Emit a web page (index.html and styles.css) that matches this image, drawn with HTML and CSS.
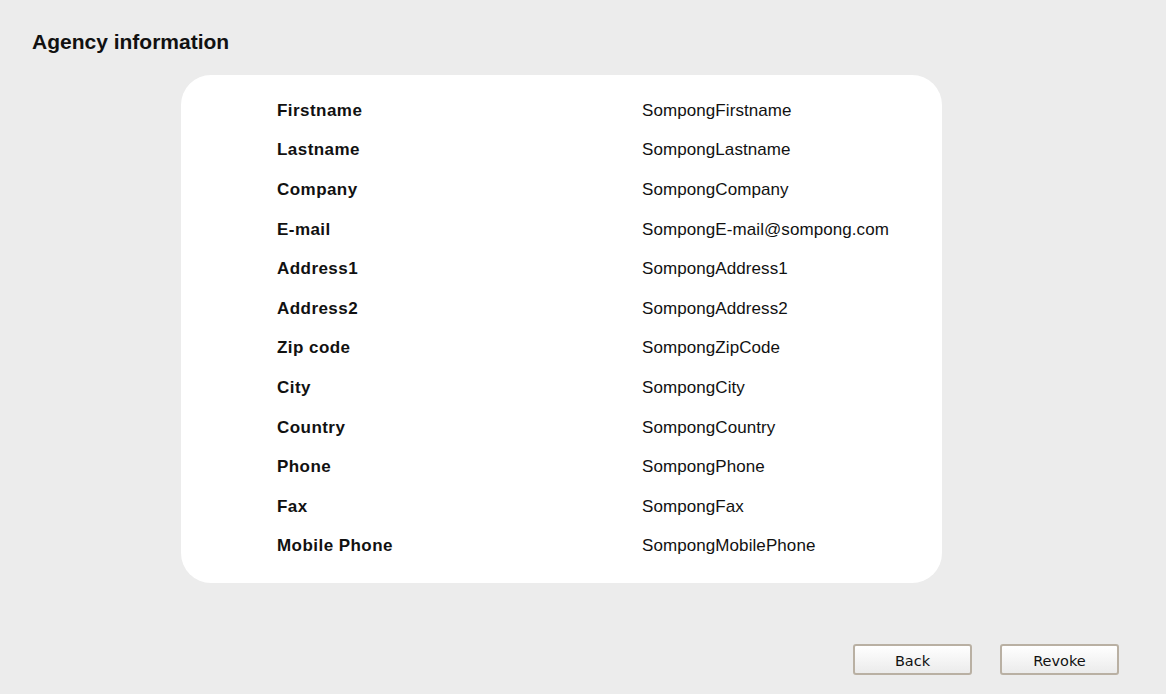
FILE: index.html
```html
<!DOCTYPE html>
<html>
<head>
<meta charset="utf-8">
<link rel="stylesheet" href="styles.css">
</head>
<body>
<div class="page">
  <h1 class="title">Agency information</h1>
  <div class="card">
    <div class="row"><span class="label">Firstname</span><span class="value">SompongFirstname</span></div>
    <div class="row"><span class="label">Lastname</span><span class="value">SompongLastname</span></div>
    <div class="row"><span class="label">Company</span><span class="value">SompongCompany</span></div>
    <div class="row"><span class="label">E-mail</span><span class="value">SompongE-mail@sompong.com</span></div>
    <div class="row"><span class="label">Address1</span><span class="value">SompongAddress1</span></div>
    <div class="row"><span class="label">Address2</span><span class="value">SompongAddress2</span></div>
    <div class="row"><span class="label">Zip code</span><span class="value">SompongZipCode</span></div>
    <div class="row"><span class="label">City</span><span class="value">SompongCity</span></div>
    <div class="row"><span class="label">Country</span><span class="value">SompongCountry</span></div>
    <div class="row"><span class="label">Phone</span><span class="value">SompongPhone</span></div>
    <div class="row"><span class="label">Fax</span><span class="value">SompongFax</span></div>
    <div class="row"><span class="label">Mobile Phone</span><span class="value">SompongMobilePhone</span></div>
  </div>
  <div class="actions">
    <button class="btn">Back</button>
    <button class="btn">Revoke</button>
  </div>
</div>
</body>
</html>
```
FILE: styles.css
```css
html, body {
  margin: 0;
  padding: 0;
  background: #ececec;
  height: 100%;
}
body {
  font-family: "Liberation Sans", Arial, sans-serif;
  color: #111;
}
.page {
  padding: 30px 0 0 0;
}
.title {
  margin: 0 0 0 32px;
  font-size: 21px;
  line-height: 24px;
  font-weight: bold;
  color: #111;
}
.card {
  margin: 21px 0 0 181px;
  width: 761px;
  box-sizing: border-box;
  background: #fff;
  border-radius: 30px;
  padding: 16px 0 17px 96px;
}
.row {
  display: grid;
  grid-template-columns: 365px 1fr;
  height: 39.6px;
  align-items: center;
  font-size: 17px;
}
.label {
  font-weight: bold;
  letter-spacing: 0.45px;
}
.value {
  letter-spacing: 0.08px;
}
.actions {
  display: flex;
  justify-content: flex-end;
  gap: 28px;
  margin: 61px 47px 0 0;
}
.btn {
  width: 119px;
  height: 31px;
  box-sizing: border-box;
  border: 2px solid #b9b0a3;
  border-radius: 3px;
  background: linear-gradient(#ffffff, #ebebeb);
  font-family: "DejaVu Sans", sans-serif;
  font-size: 14.5px;
  color: #111;
  padding: 2px 0 0 0;
}
```
